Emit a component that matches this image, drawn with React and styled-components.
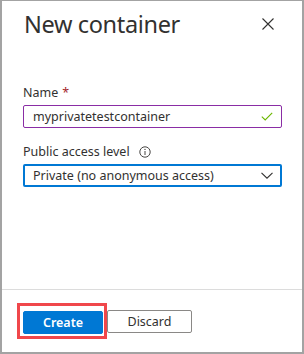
import React from 'react'
import styled, { createGlobalStyle } from 'styled-components'

const GlobalStyle = createGlobalStyle`
  html, body {
    margin: 0;
    padding: 0;
    background: #ffffff;
  }
  * { box-sizing: border-box; }
`

const Panel = styled.div`
  width: 304px;
  height: 354px;
  border: 2px solid #a3a3a3;
  border-top-width: 1px;
  background: #ffffff;
  display: flex;
  flex-direction: column;
  font-family: "Noto Sans", "Open Sans", sans-serif;
  color: #323130;
`

const Header = styled.div`
  display: flex;
  align-items: center;
  justify-content: space-between;
  padding: 0 28px 0 22px;
  height: 46px;
`

const Title = styled.h1`
  margin: 0;
  font-size: 23.5px;
  line-height: 32px;
  letter-spacing: -0.35px;
  font-weight: 400;
  color: #323130;
`

const CloseButton = styled.button`
  border: none;
  background: none;
  padding: 0;
  width: 12px;
  height: 12px;
  display: flex;
  align-items: center;
  justify-content: center;
  cursor: pointer;
`

const Body = styled.div`
  flex: 1;
  padding: 38px 20px 0 21px;
  display: flex;
  flex-direction: column;
`

const Field = styled.div`
  display: flex;
  flex-direction: column;
  margin-bottom: ${p => p.gap || 0}px;
`

const Label = styled.label`
  font-size: 12.5px;
  line-height: 16px;
  display: flex;
  align-items: center;
  gap: 9px;
  margin-bottom: 4px;
  color: #323130;
`

const Required = styled.span`
  color: #a4262c;
  margin-left: -5px;
`

const Box = styled.div`
  height: ${p => p.h}px;
  border: ${p => p.bw}px solid ${p => p.color};
  border-radius: 2px;
  display: flex;
  align-items: center;
  justify-content: space-between;
  padding: 0 ${p => 9 - p.bw}px 0 ${p => 10 - p.bw}px;
  font-size: 12.5px;
  color: #323130;
`

const Footer = styled.div`
  border-top: 1px solid #dcdcdc;
  height: 63px;
  display: flex;
  align-items: center;
  padding: 0 0 0 15px;
`

const Highlight = styled.div`
  display: flex;
  padding: 5px 1px 2px 3px;
  border: 3px solid #f0474b;
`

const Button = styled.button`
  height: 23px;
  width: ${p => p.w}px;
  font-family: "Noto Sans", "Open Sans", sans-serif;
  font-size: 12.5px;
  font-weight: ${p => (p.primary ? 600 : 400)};
  border-radius: 2px;
  border: 1px solid ${p => (p.primary ? '#0078d4' : '#8a8886')};
  background: ${p => (p.primary ? '#0078d4' : '#ffffff')};
  color: ${p => (p.primary ? '#ffffff' : '#323130')};
  padding: 0;
`

function App() {
  return (
    <>
      <GlobalStyle />
      <Panel>
        <Header>
          <Title>New container</Title>
          <CloseButton aria-label="Close">
            <svg width="12" height="12" viewBox="0 0 12 12">
              <path d="M0.5 0.5L11.5 11.5M11.5 0.5L0.5 11.5" stroke="#323130" strokeWidth="1.1" />
            </svg>
          </CloseButton>
        </Header>
        <Body>
          <Field gap={16}>
            <Label>Name <Required>*</Required></Label>
            <Box h={23} bw={1} color="#8a2da5">
              myprivatetestcontainer
              <svg width="12" height="9" viewBox="0 0 12 9">
                <path d="M0.8 4.6L4.2 8L11.2 0.8" fill="none" stroke="#6bb700" strokeWidth="1.1" />
              </svg>
            </Box>
          </Field>
          <Field>
            <Label>
              Public access level
              <svg width="12" height="12" viewBox="0 0 12 12">
                <circle cx="6" cy="6" r="5.2" fill="none" stroke="#484644" strokeWidth="1" />
                <path d="M6 5V9" stroke="#484644" strokeWidth="1" />
                <circle cx="6" cy="3.4" r="0.7" fill="#484644" />
              </svg>
            </Label>
            <Box h={23} bw={2} color="#0078d4">
              Private (no anonymous access)
              <svg width="12" height="7" viewBox="0 0 12 7">
                <path d="M0.5 0.8L6 6.2L11.5 0.8" fill="none" stroke="#323130" strokeWidth="1.1" />
              </svg>
            </Box>
          </Field>
        </Body>
        <Footer>
          <Highlight>
            <Button primary w={80}>Create</Button>
          </Highlight>
          <Button w={85}>Discard</Button>
        </Footer>
      </Panel>
    </>
  )
}

export default App
